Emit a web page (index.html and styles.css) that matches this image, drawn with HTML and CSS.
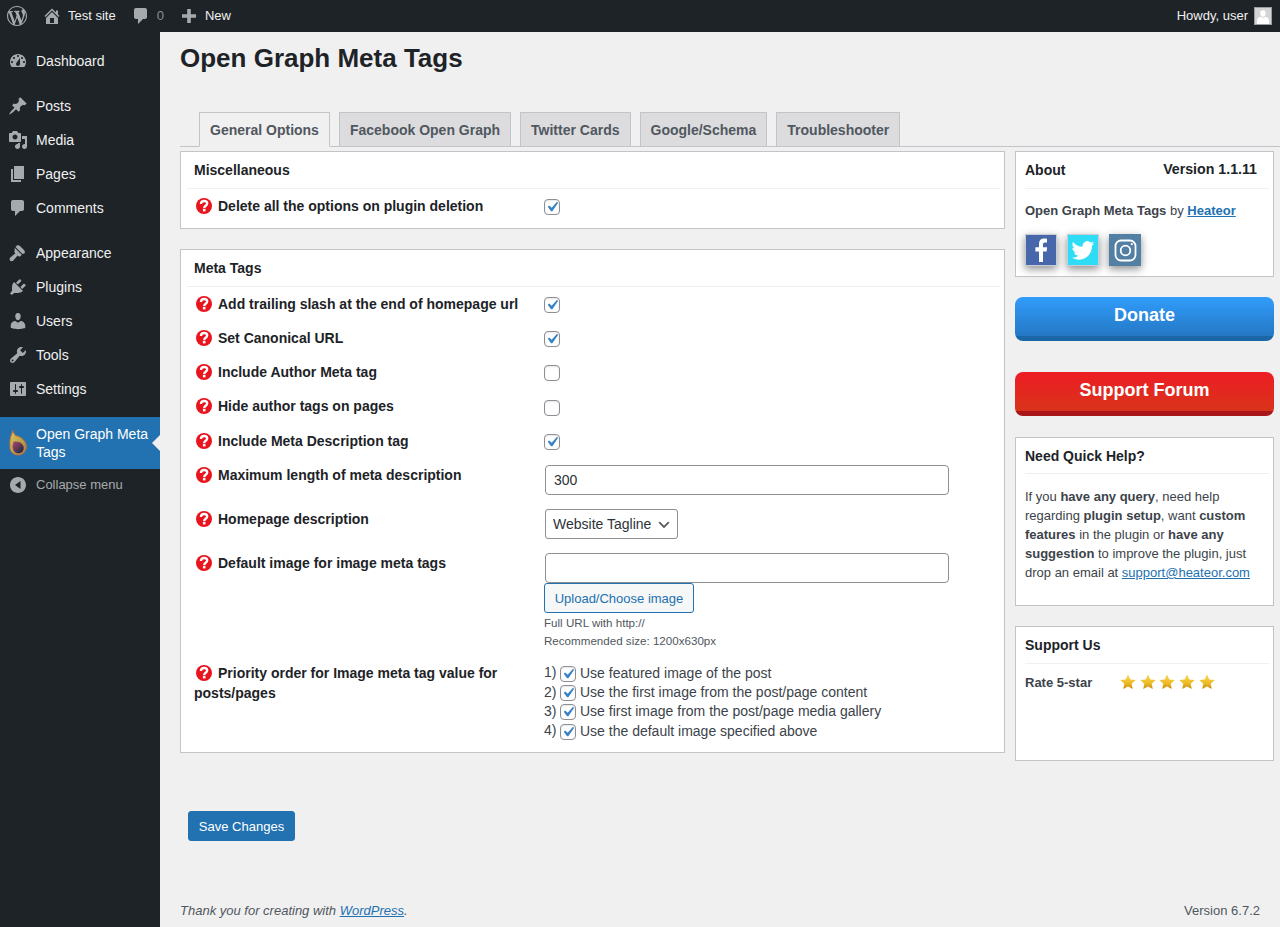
FILE: index.html
```html
<!DOCTYPE html>
<html lang="en">
<head>
<meta charset="utf-8">
<title>Open Graph Meta Tags</title>
<link rel="stylesheet" href="styles.css">
</head>
<body>
<svg class="defs" width="0" height="0" aria-hidden="true">
  <defs>
    <symbol id="help" viewBox="0 0 16 16">
      <circle cx="8" cy="8" r="8" fill="#e9141d"/>
      <path d="M4.900 6C5 4.200 6.300 3 8.100 3c1.800 0 3.100 1.100 3.100 2.600 0 2.200-3 2.200-3 4.300" fill="none" stroke="#fff" stroke-width="2.300"/>
      <rect x="6.900" y="10.800" width="2.600" height="2.600" fill="#fff"/>
    </symbol>
    <linearGradient id="goldstar" x1="0" y1="0" x2="0" y2="1">
      <stop offset="0" stop-color="#f7d75a"/>
      <stop offset="0.6" stop-color="#eebb24"/>
      <stop offset="1" stop-color="#c98a10"/>
    </linearGradient>
    <linearGradient id="flame" x1="0" y1="0" x2="1" y2="1">
      <stop offset="0" stop-color="#d6cb5c"/>
      <stop offset="1" stop-color="#a8803e"/>
    </linearGradient>
    <linearGradient id="ball" x1="0" y1="0" x2="1" y2="1">
      <stop offset="0" stop-color="#b0486e"/>
      <stop offset="1" stop-color="#10243f"/>
    </linearGradient>
    <symbol id="star" viewBox="0 0 16 16">
      <path d="M8 .4l2.300 5 5.400.6-4 3.700 1.100 5.400L8 12.400l-4.800 2.700 1.100-5.400-4-3.700 5.400-.6z" fill="url(#goldstar)"/>
    </symbol>
  </defs>
</svg>

<header class="adminbar">
  <div class="bar-left">
    <a class="bar-item bar-wp"><svg class="bar-icon-wp" viewBox="0 0 20 20"><path d="M20 10c0-5.510-4.490-10-10-10C4.480 0 0 4.490 0 10c0 5.520 4.480 10 10 10 5.510 0 10-4.480 10-10zM7.780 15.370L4.370 6.220c.55-.02 1.170-.08 1.170-.08.5-.06.44-1.130-.06-1.110 0 0-1.450.11-2.370.11-.18 0-.37 0-.58-.01C4.120 2.690 6.870 1.110 10 1.110c2.330 0 4.450.87 6.050 2.340-.68-.11-1.650.39-1.650 1.580 0 .74.45 1.360.9 2.100.35.61.55 1.360.55 2.460 0 1.490-1.400 5-1.400 5l-3.030-8.370c.54-.02.82-.17.82-.17.5-.05.44-1.250-.06-1.220 0 0-1.440.12-2.380.12-.87 0-2.330-.12-2.330-.12-.5-.03-.56 1.200-.06 1.220l.92.08 1.260 3.410zM17.410 10c.24-.64.74-1.870.43-4.250.7 1.290 1.050 2.710 1.050 4.250 0 3.290-1.730 6.240-4.400 7.780.97-2.590 1.940-5.200 2.920-7.780zM6.100 18.090C3.120 16.650 1.110 13.530 1.110 10c0-1.300.23-2.480.72-3.590C3.250 10.300 4.670 14.200 6.100 18.090zm4.030-6.630l2.580 6.980c-.86.29-1.760.45-2.710.45-.79 0-1.570-.11-2.290-.33.81-2.380 1.620-4.740 2.420-7.100z"/></svg></a>
    <a class="bar-item bar-site"><svg class="bar-icon" viewBox="0 0 20 20"><path d="M16 8.500l1.530 1.530-1.060 1.060L10 4.620l-6.470 6.470-1.060-1.060L10 2.500l4 4v-2h2v4zm-6-2.460l6 5.990V18H4v-5.970zM12 17v-5H8v5h4z"/></svg>Test site</a>
    <a class="bar-item bar-comments"><svg class="bar-icon" viewBox="0 0 20 20"><path d="M5 2h9c1.100 0 2 .9 2 2v7c0 1.100-.9 2-2 2h-2l-5 5v-5H5c-1.100 0-2-.9-2-2V4c0-1.100.9-2 2-2z"/></svg><span class="bar-count">0</span></a>
    <a class="bar-item bar-new"><svg class="bar-icon" viewBox="0 0 20 20"><path d="M17 8.200v3.600h-5.200V17H8.200v-5.200H3V8.200h5.200V3h3.600v5.200z"/></svg>New</a>
  </div>
  <a class="bar-item bar-user">Howdy, user<span class="avatar"><svg viewBox="0 0 16 16"><path d="M8 2.200c1.900 0 2.900 1.500 2.700 3.300-.2 1.800-1 3.200-2.700 3.200S5.500 7.300 5.300 5.500C5.100 3.700 6.100 2.200 8 2.200zM8 10l2.300-1.200C12.600 9 14 10.700 14 13v3H2v-3c0-2.300 1.400-4 3.700-4.200z"/></svg></span></a>
</header>

<div class="shell">
  <nav class="sidemenu">
    <ul class="menu">
      <li class="menu-item"><svg class="menu-icon" viewBox="0 0 20 20"><path fill-rule="evenodd" d="M3.760 16h12.480c1.100-1.370 1.760-3.110 1.760-5 0-4.420-3.580-8-8-8s-8 3.580-8 8c0 1.890.66 3.630 1.760 5zM10 4c.55 0 1 .45 1 1s-.45 1-1 1-1-.45-1-1 .45-1 1-1zM6 6c.55 0 1 .45 1 1s-.45 1-1 1-1-.45-1-1 .45-1 1-1zm8 0c.55 0 1 .45 1 1s-.45 1-1 1-1-.45-1-1 .45-1 1-1zm-5.370 5.550L12 7v6c0 1.100-.9 2-2 2s-2-.9-2-2c0-.57.24-1.080.63-1.450zM4 10c.55 0 1 .45 1 1s-.45 1-1 1-1-.45-1-1 .45-1 1-1zm12 0c.55 0 1 .45 1 1s-.45 1-1 1-1-.45-1-1 .45-1 1-1z"/></svg>Dashboard</li>
      <li class="menu-item menu-gap"><svg class="menu-icon" viewBox="0 0 20 20"><path d="M10.440 3.020l1.820-1.820 6.360 6.350-1.830 1.820c-1.050-.68-2.480-.57-3.410.36l-.75.75c-.92.93-1.040 2.350-.35 3.410l-1.830 1.820-2.410-2.410-2.800 2.790c-.42.42-3.380 2.710-3.800 2.290s1.860-3.390 2.280-3.810l2.790-2.790L4.100 9.360l1.830-1.820c1.050.69 2.480.57 3.400-.36l.75-.75c.93-.92 1.050-2.350.36-3.410z"/></svg>Posts</li>
      <li class="menu-item"><svg class="menu-icon" viewBox="0 0 20 20"><path fill-rule="evenodd" d="M13 11V4c0-.55-.45-1-1-1h-1.670L9 1H5L3.670 3H2c-.55 0-1 .45-1 1v7c0 .55.45 1 1 1h10c.55 0 1-.45 1-1zM7 4.500c1.380 0 2.500 1.120 2.500 2.500S8.380 9.500 7 9.500 4.500 8.380 4.500 7 5.620 4.500 7 4.500zM14 6h5v10.500c0 1.380-1.120 2.500-2.500 2.500S14 17.880 14 16.500s1.120-2.500 2.500-2.500c.17 0 .34.02.5.05V9h-3V6zm-4 8.050V13h2v3.500c0 1.380-1.120 2.500-2.500 2.500S7 17.880 7 16.500 8.120 14 9.500 14c.17 0 .34.02.5.05z"/></svg>Media</li>
      <li class="menu-item"><svg class="menu-icon" viewBox="0 0 20 20"><path d="M6 15V2h10v13H6zm-1 1h8v2H3V5h2v11z"/></svg>Pages</li>
      <li class="menu-item"><svg class="menu-icon" viewBox="0 0 20 20"><path d="M5 2h9c1.100 0 2 .9 2 2v7c0 1.100-.9 2-2 2h-2l-5 5v-5H5c-1.100 0-2-.9-2-2V4c0-1.100.9-2 2-2z"/></svg>Comments</li>
      <li class="menu-item menu-gap"><svg class="menu-icon" viewBox="0 0 20 20"><path d="M14.480 11.060L7.410 3.990l1.500-1.500c.5-.56 2.300-.47 3.540.89 1.240 1.360 2.330 2.300 3.490 3.500 1.170 1.200 1.200 2.900.65 3.440zM6.700 4.700l7.070 7.070-1.400 1.410c-.5.5-1.500.5-2 0l-.7-.7-4.600 5.300c-.7.7-2.400.4-2.900-.1s-.8-2.200-.1-2.900l5.300-4.600-.7-.7c-.5-.5-.5-1.500 0-2z"/></svg>Appearance</li>
      <li class="menu-item"><svg class="menu-icon" viewBox="0 0 20 20"><path d="M13.110 4.360L9.870 7.600 8 5.730l3.240-3.240c.35-.34 1.050-.2 1.560.32.52.51.66 1.210.31 1.550zm-8 1.770l.91-1.120 9.010 9.010-1.190.84c-.71.71-2.630 1.160-3.820 1.160H6.140L4.900 17.260c-.59.59-1.540.59-2.120 0-.59-.58-.59-1.530 0-2.120l1.240-1.240v-3.880c0-1.130.4-3.190 1.090-3.890zm7.260 3.970l3.240-3.240c.34-.35 1.040-.21 1.550.31.52.51.66 1.210.31 1.550l-3.240 3.250z"/></svg>Plugins</li>
      <li class="menu-item"><svg class="menu-icon" viewBox="0 0 20 20"><path d="M10 9.250c-2.270 0-2.730-3.440-2.730-3.440C7 4.020 7.820 2 9.970 2c2.160 0 2.980 2.020 2.710 3.810 0 0-.41 3.440-2.680 3.440zm0 2.570L12.720 10c2.390 0 4.520 2.330 4.520 4.530v2.490s-3.650 1.130-7.240 1.130c-3.650 0-7.240-1.130-7.240-1.130v-2.490c0-2.250 1.940-4.480 4.470-4.480z"/></svg>Users</li>
      <li class="menu-item"><svg class="menu-icon" viewBox="0 0 20 20"><path fill-rule="evenodd" d="M16.680 9.770c-1.340 1.340-3.300 1.670-4.950.99l-5.410 6.520c-.99.99-2.590.99-3.580 0s-.99-2.590 0-3.570l6.520-5.420c-.68-1.650-.35-3.610.99-4.950 1.280-1.280 3.120-1.620 4.720-1.060l-2.890 2.890 2.820 2.820 2.860-2.870c.53 1.580.18 3.390-1.080 4.650zM3.810 16.210c.4.39 1.040.39 1.430 0 .4-.4.4-1.040 0-1.430-.39-.4-1.030-.4-1.430 0-.39.39-.39 1.030 0 1.430z"/></svg>Tools</li>
      <li class="menu-item"><svg class="menu-icon" viewBox="0 0 20 20"><path fill-rule="evenodd" d="M18 16V4c0-.55-.45-1-1-1H3c-.55 0-1 .45-1 1v12c0 .55.45 1 1 1h14c.55 0 1-.45 1-1zM8 11h1c.55 0 1 .45 1 1s-.45 1-1 1H8v1.500c0 .28-.22.5-.5.5s-.5-.22-.5-.5V13H6c-.55 0-1-.45-1-1s.45-1 1-1h1V5.500c0-.28.22-.5.5-.5s.5.22.5.5V11zm5-2h-1c-.55 0-1-.45-1-1s.45-1 1-1h1V5.500c0-.28.22-.5.5-.5s.5.22.5.5V7h1c.55 0 1 .45 1 1s-.45 1-1 1h-1v5.500c0 .28-.22.5-.5.5s-.5-.22-.5-.5V9z"/></svg>Settings</li>
      <li class="menu-item menu-current">
        <svg class="menu-fire" viewBox="0 0 18 26"><path d="M3.500 0c.3 2.800 2.400 3.800 3 5.800C9 6 11.500 7 13.500 9c3 2.500 4 5.500 3.800 8.500-.3 4-3.800 7.500-8 7.500C4.500 25 1 21.500 1 17.500 1 14 .5 11 1.500 7.500 2.200 5 3.500 3 3.500 0z" fill="url(#flame)" stroke="#c4693a" stroke-width="1"/><path d="M4.500 12c2-1 6-.5 8.500 2 2.200 2.200 2.300 5 .8 7.300-2 2.500-6 2.800-8.300.5C3 19 3.300 15 4.500 12z" fill="url(#ball)"/></svg>
        <span>Open Graph Meta Tags</span>
      </li>
      <li class="menu-item menu-collapse"><svg class="menu-icon" viewBox="0 0 20 20"><path fill-rule="evenodd" d="M18 10c0-4.420-3.580-8-8-8s-8 3.580-8 8 3.580 8 8 8 8-3.580 8-8zm-5.500-4v8L7 10z"/></svg>Collapse menu</li>
    </ul>
  </nav>

  <main class="content">
    <h1 class="page-title">Open Graph Meta Tags</h1>
    <div class="tabs">
      <a class="tab tab-active">General Options</a>
      <a class="tab">Facebook Open Graph</a>
      <a class="tab">Twitter Cards</a>
      <a class="tab">Google/Schema</a>
      <a class="tab">Troubleshooter</a>
    </div>

    <div class="columns">
      <div class="col-main">
        <section class="panel panel-misc">
          <h3 class="panel-title">Miscellaneous</h3>
          <div class="row">
            <div class="label"><svg class="help"><use href="#help"/></svg>Delete all the options on plugin deletion</div>
            <div class="field"><input class="check" type="checkbox" checked></div>
          </div>
        </section>

        <section class="panel panel-meta">
          <h3 class="panel-title">Meta Tags</h3>
          <div class="row">
            <div class="label"><svg class="help"><use href="#help"/></svg>Add trailing slash at the end of homepage url</div>
            <div class="field"><input class="check" type="checkbox" checked></div>
          </div>
          <div class="row">
            <div class="label"><svg class="help"><use href="#help"/></svg>Set Canonical URL</div>
            <div class="field"><input class="check" type="checkbox" checked></div>
          </div>
          <div class="row">
            <div class="label"><svg class="help"><use href="#help"/></svg>Include Author Meta tag</div>
            <div class="field"><input class="check" type="checkbox"></div>
          </div>
          <div class="row row-wide">
            <div class="label"><svg class="help"><use href="#help"/></svg>Hide author tags on pages</div>
            <div class="field"><input class="check" type="checkbox"></div>
          </div>
          <div class="row">
            <div class="label"><svg class="help"><use href="#help"/></svg>Include Meta Description tag</div>
            <div class="field"><input class="check" type="checkbox" checked></div>
          </div>
          <div class="row row-input">
            <div class="label"><svg class="help"><use href="#help"/></svg>Maximum length of meta description</div>
            <div class="field-input"><input class="text-input" type="text" value="300"></div>
          </div>
          <div class="row row-input">
            <div class="label"><svg class="help"><use href="#help"/></svg>Homepage description</div>
            <div class="field-input"><select class="select"><option>Website Tagline</option></select></div>
          </div>
          <div class="row row-input row-image">
            <div class="label"><svg class="help"><use href="#help"/></svg>Default image for image meta tags</div>
            <div class="field-input">
              <input class="text-input" type="text">
              <button class="upload" type="button">Upload/Choose image</button>
              <p class="note">Full URL with http://<br>Recommended size: 1200x630px</p>
            </div>
          </div>
          <div class="row row-priority">
            <div class="label"><svg class="help"><use href="#help"/></svg>Priority order for Image meta tag value for posts/pages</div>
            <ol class="priority">
              <li><span class="num">1)</span><input class="check" type="checkbox" checked>Use featured image of the post</li>
              <li><span class="num">2)</span><input class="check" type="checkbox" checked>Use the first image from the post/page content</li>
              <li><span class="num">3)</span><input class="check" type="checkbox" checked>Use first image from the post/page media gallery</li>
              <li><span class="num">4)</span><input class="check" type="checkbox" checked>Use the default image specified above</li>
            </ol>
          </div>
        </section>
      </div>

      <aside class="col-side">
        <section class="box box-about">
          <div class="box-head"><h3 class="box-title">About</h3><span class="box-version">Version 1.1.11</span></div>
          <p class="about-line"><b>Open Graph Meta Tags</b> by <a class="link-bold">Heateor</a></p>
          <div class="socials">
            <a class="social social-fb"><svg viewBox="0 0 32 32"><path d="M18 28V17.500h3.600l.5-4.200H18V10.500c0-1.200.4-2 2.100-2H22V4.700C21.600 4.600 20.400 4.500 19 4.500c-3 0-5 1.800-5 5.100v3.700h-3.600v4.200H14V28z" fill="#fff"/></svg></a>
            <a class="social social-tw"><svg viewBox="0 0 32 32"><g transform="translate(4.500 5) scale(.95)"><path d="M23.953 4.570a10 10 0 01-2.825.775 4.958 4.958 0 002.163-2.723c-.951.555-2.005.959-3.127 1.184a4.920 4.920 0 00-8.384 4.482C7.690 8.095 4.067 6.130 1.640 3.162a4.822 4.822 0 00-.666 2.475c0 1.710.870 3.213 2.188 4.096a4.904 4.904 0 01-2.228-.616v.06a4.923 4.923 0 003.946 4.827 4.996 4.996 0 01-2.212.085 4.936 4.936 0 004.604 3.417 9.867 9.867 0 01-6.102 2.105c-.39 0-.779-.023-1.170-.067a13.995 13.995 0 007.557 2.209c9.053 0 13.998-7.496 13.998-13.985 0-.21 0-.42-.015-.63A9.935 9.935 0 0024 4.590z" fill="#fff"/></g></svg></a>
            <a class="social social-ig"><svg viewBox="0 0 32 32"><rect x="6.500" y="6.500" width="20" height="20" rx="5.500" fill="none" stroke="#fff" stroke-width="1.800"/><circle cx="16.500" cy="16.500" r="4.800" fill="none" stroke="#fff" stroke-width="1.800"/><circle cx="22.800" cy="10.200" r="1.100" fill="#fff"/></svg></a>
          </div>
        </section>

        <a class="cta cta-blue">Donate</a>
        <a class="cta cta-red">Support Forum</a>

        <section class="box box-help">
          <div class="box-head"><h3 class="box-title">Need Quick Help?</h3></div>
          <p class="help-text">If you <b>have any query</b>, need help regarding <b>plugin setup</b>, want <b>custom features</b> in the plugin or <b>have any suggestion</b> to improve the plugin, just drop an email at <a class="link">support@heateor.com</a></p>
        </section>

        <section class="box box-support">
          <div class="box-head"><h3 class="box-title">Support Us</h3></div>
          <div class="rate">
            <b class="rate-label">Rate 5-star</b>
            <div class="stars">
              <svg class="star"><use href="#star"/></svg>
              <svg class="star"><use href="#star"/></svg>
              <svg class="star"><use href="#star"/></svg>
              <svg class="star"><use href="#star"/></svg>
              <svg class="star"><use href="#star"/></svg>
            </div>
          </div>
        </section>
      </aside>
    </div>

    <div class="save-row"><button class="save" type="button">Save Changes</button></div>

    <footer class="footer">
      <span class="thanks">Thank you for creating with <a class="link">WordPress</a>.</span>
      <span>Version 6.7.2</span>
    </footer>
  </main>
</div>
</body>
</html>
```

FILE: styles.css
```css
* { box-sizing: border-box; }
html, body { margin: 0; height: 100%; overflow: hidden; }
body {
  display: flex;
  flex-direction: column;
  background: #f0f0f1;
  color: #3c434a;
  font-family: "Liberation Sans", Arial, sans-serif;
  font-size: 13px;
  line-height: 1.4;
}
.defs { position: absolute; }
a { cursor: pointer; }

/* admin bar */
.adminbar {
  flex: 0 0 32px;
  display: flex;
  justify-content: space-between;
  align-items: center;
  background: #1d2327;
  color: #f0f0f1;
}
.bar-left { display: flex; align-items: center; height: 32px; }
.bar-item { display: flex; align-items: center; height: 32px; line-height: 32px; }
.bar-icon { width: 20px; height: 20px; fill: #a7aaad; margin-right: 6px; }
.bar-icon-wp { width: 20px; height: 20px; fill: #a7aaad; }
.bar-wp { padding: 0 7px; width: 34px; }
.bar-site { margin-left: 8px; margin-right: 15px; }
.bar-comments { margin-right: 15px; }
.bar-count { color: #8c8f94; }
.bar-user { padding-right: 8px; }
.avatar {
  width: 18px;
  height: 18px;
  margin-left: 6px;
  background: #d4d4d4;
  border: 1px solid #9a9d9f;
  display: block;
}
.avatar svg { display: block; width: 16px; height: 16px; fill: #fff; }

/* shell */
.shell { flex: 1; display: flex; min-height: 0; }
.sidemenu { flex: 0 0 160px; background: #1d2327; padding-top: 12px; }
.menu { list-style: none; margin: 0; padding: 0; }
.menu-item {
  position: relative;
  display: flex;
  align-items: center;
  height: 34px;
  padding-left: 8px;
  color: #f0f0f1;
  font-size: 14px;
  line-height: 18px;
}
.menu-gap { margin-top: 11px; }
.menu-icon { flex: none; width: 20px; height: 20px; margin-right: 8px; fill: #a7aaad; }
.menu-current {
  height: 52px;
  margin-top: 11px;
  background: #2271b1;
  color: #fff;
}
.menu-current::after {
  content: "";
  position: absolute;
  right: 0;
  top: 18px;
  border: 8px solid transparent;
  border-right-color: #f0f0f1;
  border-left-width: 0;
}
.menu-fire { flex: none; width: 18px; height: 26px; margin: 0 9px 0 1px; }
.menu-collapse { height: 32px; font-size: 13px; color: #a7aaad; }

/* content */
.content { flex: 1; min-width: 0; display: flex; flex-direction: column; padding: 10px 0 0 20px; }
.page-title { margin: 0 0 38px; font-size: 26px; line-height: 33px; font-weight: 700; color: #1d2327; height: 32px; }
.tabs { display: flex; gap: 9px; height: 35px; padding-left: 19px; border-bottom: 1px solid #c3c4c7; margin-bottom: 4px; }
.tab {
  height: 35px;
  padding: 0 10px;
  border: 1px solid #c3c4c7;
  background: #dcdcde;
  color: #50575e;
  font-size: 14px;
  font-weight: 700;
  line-height: 34px;
}
.tab-active { background: #f0f0f1; border-bottom-color: #f0f0f1; }

.columns { display: flex; gap: 10px; align-items: flex-start; }
.col-main { flex: 0 0 825px; }
.col-side { flex: 0 0 259px; display: flex; flex-direction: column; }

.panel { background: #fff; border: 1px solid #c3c4c7; padding: 0 4px 0 6px; }
.panel-misc { padding-bottom: 5px; }
.panel-meta { margin-top: 20px; padding-bottom: 11px; }
.panel-title {
  margin: 0;
  height: 37px;
  padding-left: 7px;
  border-bottom: 1px solid #f0f0f1;
  color: #1d2327;
  font-size: 14px;
  font-weight: 700;
  line-height: 36px;
}
.row { display: grid; grid-template-columns: 357px 1fr; height: 34px; }
.row-wide { height: 35px; }
.label {
  padding: 7px 20px 0 7px;
  color: #1d2327;
  font-size: 14px;
  font-weight: 700;
  line-height: 20px;
}
.help { width: 16px; height: 16px; margin: 0 6px 0 2px; vertical-align: -3px; }
.field { padding-top: 10px; }
.row-wide .field { padding-top: 11px; }
.check {
  appearance: none;
  display: block;
  flex: none;
  width: 16px;
  height: 16px;
  margin: 0;
  border: 1px solid #8c8f94;
  border-radius: 4px;
  background: #fff center / 20px 20px no-repeat;
  box-shadow: inset 0 1px 2px rgba(0,0,0,.1);
}
.check:checked {
  background-image: url("data:image/svg+xml;utf8,<svg xmlns='http://www.w3.org/2000/svg' viewBox='0 0 20 20'><path d='M14.83 4.89l1.34.94-5.81 8.38H9.02L5.78 9.67l1.34-1.25 2.57 2.4z' fill='%233582c4'/></svg>");
}
.row-input { height: auto; padding-bottom: 7px; }
.row-image { padding-bottom: 6px; }
.field-input { padding-top: 7px; }
.text-input {
  display: block;
  width: 404px;
  height: 30px;
  margin-left: 1px;
  padding: 0 8px;
  border: 1px solid #8c8f94;
  border-radius: 4px;
  background: #fff;
  color: #2c3338;
  font: 14px "Liberation Sans", Arial, sans-serif;
}
.select {
  display: block;
  appearance: none;
  width: 133px;
  height: 30px;
  margin-left: 1px;
  padding: 0 24px 0 7px;
  border: 1px solid #8c8f94;
  border-radius: 3px;
  color: #2c3338;
  font: 14px "Liberation Sans", Arial, sans-serif;
  background: #fff url("data:image/svg+xml;utf8,<svg xmlns='http://www.w3.org/2000/svg' width='20' height='20'><path d='M5 6l5 5 5-5 2 1-7 7-7-7z' fill='%23555'/></svg>") no-repeat right 5px top 55% / 16px 16px;
}
.upload {
  display: block;
  width: 150px;
  height: 30px;
  padding: 0;
  border: 1px solid #2271b1;
  border-radius: 3px;
  background: #f6f7f7;
  color: #2271b1;
  font: 13px "Liberation Sans", Arial, sans-serif;
}
.note { margin: 0; padding-top: 1px; color: #50575e; font-size: 11.6px; line-height: 18px; }
.row-priority { height: auto; }
.priority { list-style: none; margin: 0; padding: 8px 0 0; color: #3c434a; font-size: 14px; }
.priority li { display: flex; align-items: center; height: 19.3px; }
.num { width: 16px; margin-top: -1px; }
.priority .check { margin-right: 4px; }

/* side boxes */
.box { background: #fff; border: 1px solid #c3c4c7; padding: 0 4px 0 9px; }
.box-head {
  display: flex;
  justify-content: space-between;
  height: 37px;
  border-bottom: 1px solid #f0f0f1;
}
.box-title { margin: 0; color: #1d2327; font-size: 14px; font-weight: 700; line-height: 36px; }
.box-version { padding-right: 12px; color: #1d2327; font-size: 14.2px; font-weight: 700; line-height: 34px; }
.about-line { margin: 12px 0 0; line-height: 20px; }
.link-bold { color: #2271b1; font-weight: 700; text-decoration: underline; }
.link { color: #2271b1; text-decoration: underline; }
.socials { display: flex; gap: 10px; padding: 13px 0 10px; }
.social { display: block; width: 32px; height: 32px; box-shadow: 0 3px 8px rgba(0,0,0,.45); }
.social svg { display: block; width: 32px; height: 32px; }
.social-fb { background: #4867aa; border: 1px solid #c9ced6; }
.social-fb svg, .social-tw svg { margin: -1px; }
.social-tw { background: #2fdcf5; border: 1px solid #c9ced6; }
.social-ig { background: #527fa4; }

.cta {
  display: block;
  height: 44px;
  border-radius: 8px;
  color: #fff;
  font-size: 18px;
  font-weight: 700;
  line-height: 36px;
  text-align: center;
}
.cta-blue {
  margin-top: 20px;
  background: linear-gradient(#319cfb, #2478c4 39px, #1b66a6 39px);
}
.cta-red {
  margin-top: 31px;
  background: linear-gradient(#ed1d24, #d8331a 39px, #a8161a 39px);
}
.box-help { margin-top: 21px; }
.box-help .box-head { height: 36px; }
.help-text { margin: 13px 0 23px; line-height: 19px; }
.box-support { margin-top: 20px; height: 135px; }
.rate { display: flex; align-items: center; margin-top: 9px; }
.rate-label { width: 95px; padding-top: 1px; }
.stars { display: flex; gap: 3.700px; margin-bottom: 2px; }
.star { width: 16px; height: 16px; display: block; }

/* footer */
.save-row { padding: 50px 0 0 8px; }
.save {
  display: block;
  width: 107px;
  height: 30px;
  padding: 0;
  border: 1px solid #2271b1;
  border-radius: 3px;
  background: #2271b1;
  color: #fff;
  font: 13px "Liberation Sans", Arial, sans-serif;
}
.footer {
  margin-top: auto;
  display: flex;
  justify-content: space-between;
  padding: 0 20px 6px 0;
  color: #50575e;
  font-size: 13px;
  line-height: 20px;
}
.thanks { font-style: italic; }
```
